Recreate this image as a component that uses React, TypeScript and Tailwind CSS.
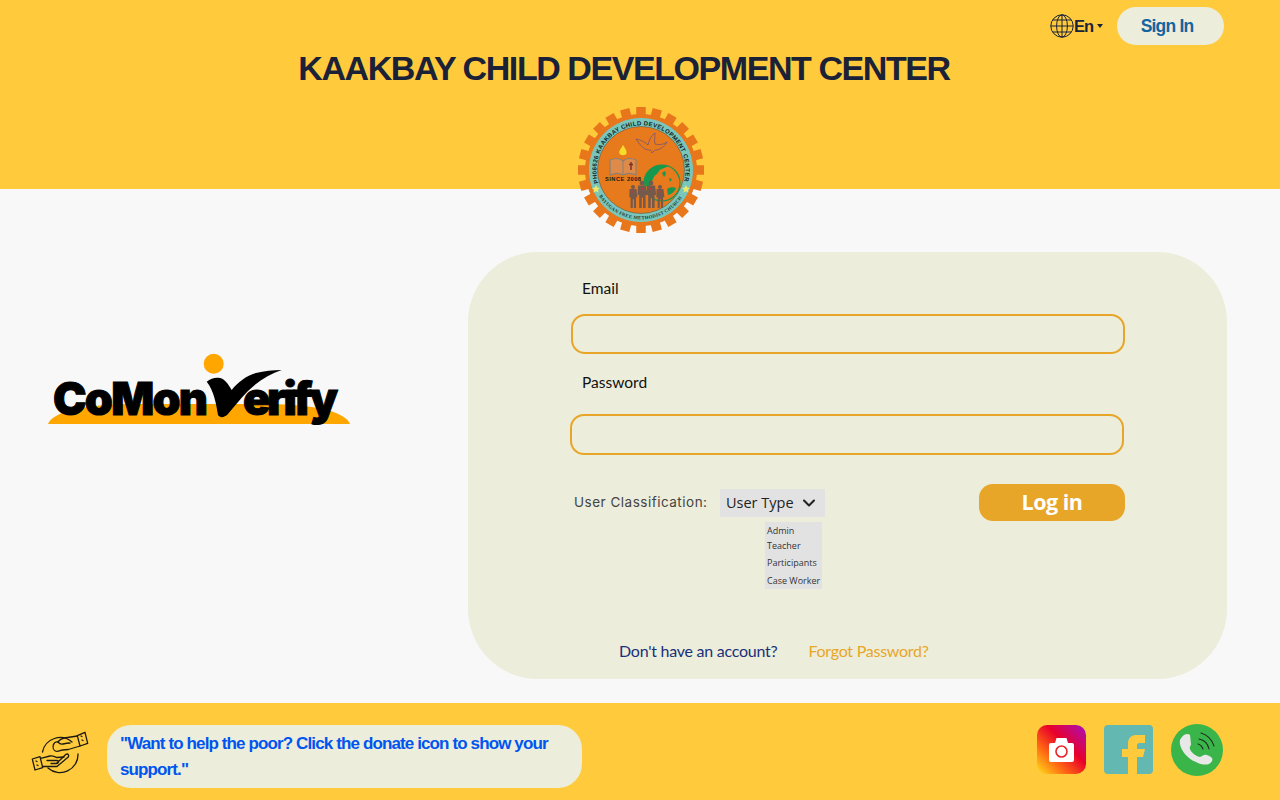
import { ChevronDown } from "lucide-react";

function GlobeIcon() {
  return (
    <svg viewBox="0 0 24 24" className="w-6 h-6" fill="none" stroke="#1b2238" strokeWidth="1">
      <circle cx="12" cy="12" r="11.2" />
      <ellipse cx="12" cy="12" rx="5.4" ry="11.2" />
      <path d="M12 .8v22.4M.8 12h22.4M2.6 6h18.8M2.6 18h18.8" />
    </svg>
  );
}

function Person({ x, y, s }: { x: number; y: number; s: number }) {
  return (
    <g transform={`translate(${x} ${y}) scale(${s})`}>
      <circle cx="0" cy="-3" r="3" fill="#75594d" />
      <path d="M-5 0h10l1.500 12h-2v16h-3.200v-13h-1.600v13h-3.200v-16h-2z" fill="#75594d" />
      <circle cx="0" cy="4" r="1.300" fill="#d4303a" />
    </g>
  );
}

function Seal() {
  const teeth = Array.from({ length: 24 }, (_, i) => (i * 360) / 24);
  return (
    <svg viewBox="0 0 128 128" className="w-32 h-32 overflow-visible">
      <defs>
        <path id="sealTop" d="M 21.500 77 A 44.500 44.500 0 1 1 106.500 77" />
        <path id="sealBottom" d="M 22 90 A 49.500 49.500 0 0 0 106 90" />
      </defs>
      {teeth.map((a) => (
        <rect key={a} x="59.250" y="1" width="9.500" height="12" fill="#e8761b" transform={`rotate(${a} 64 64)`} />
      ))}
      <circle cx="64" cy="64" r="56" fill="#e8761b" />
      <circle cx="64" cy="64" r="52" fill="#79c6bd" />
      <circle cx="64" cy="64" r="43.500" fill="#e67a1c" stroke="#2c3a3a" strokeWidth="0.4" />
      <text fontFamily="Liberation Sans" fontWeight="700" fontSize="6.100" fill="#10241f">
        <textPath href="#sealTop" textLength="164">PH06626 KAAKBAY CHILD DEVELOPMENT CENTER</textPath>
      </text>
      <text fontFamily="Liberation Serif" fontWeight="700" fontSize="4.800" fill="#1f3a30">
        <textPath href="#sealBottom" textLength="98">BAYUGAN FREE METHODIST CHURCH</textPath>
      </text>
      <path d="M19 79l1.200 2.600 2.800.3-2.100 1.900.6 2.800-2.500-1.400-2.500 1.400.6-2.800-2.100-1.900 2.800-.3z" fill="#efe96a" />
      <path d="M109 79l1.200 2.600 2.800.3-2.100 1.900.6 2.800-2.500-1.400-2.500 1.400.6-2.800-2.100-1.900 2.800-.3z" fill="#efe96a" />
      <path d="M46 39c3 4.500 4 6.500 3.500 8.500s-6 2.500-7 0 1-4 3.500-8.500z" fill="#f7dc2a" />
      <path d="M33 54c5-2 10-2 13 1 3-3 8-3 13-1v15c-5-2-10-2-13 0-3-2-8-2-13 0z" fill="#dd8a4a" stroke="#8a8078" strokeWidth="1.200" />
      <path d="M46 55v14" stroke="#8a8078" strokeWidth="1" />
      <path d="M54 56v8M52 58.500h4" stroke="#7a2f25" strokeWidth="1.400" />
      <text x="28" y="75" fontFamily="Liberation Sans" fontWeight="700" fontSize="5.700" fill="#1a1a1a" textLength="36">SINCE 2008</text>
      <path d="M59 33c5 1 9 3 12 6 1-5 3-9 7-12 0 5-1 8 0 11 3 1 8 1 12-2-3 5-7 8-12 8l-3 3c0-2-1-3-3-3-5 0-9-5-13-11z" fill="none" stroke="#57488f" strokeWidth="0.6" />
      <path d="M67 77a18 18 0 0 1 18-18l6 1c-2 2-7 2-9 5-2 4-5 4-6 8-2 3-2 6-4 9-2-1-4-3-5-5z" fill="#16994e" />
      <path d="M85 67l3-2 1 3-2 3zM92 72l3 1-2 3zM90 83c3-2 6-2 9-1-1 3-4 6-8 7z" fill="#16994e" />
      <circle cx="85" cy="77" r="18" fill="none" stroke="#16994e" strokeWidth="1.200" />
      <Person x={56} y={83} s={0.68} />
      <Person x={65} y={79.500} s={0.8} />
      <Person x={74} y={79.500} s={0.8} />
      <Person x={83} y={83} s={0.68} />
    </svg>
  );
}

function CoMonLogo() {
  return (
    <svg viewBox="0 0 302 72" className="w-[302px] h-[72px] overflow-visible">
      <path d="M0 71c4-11 30-19 80-20h142c50 1 76 9 80 20z" fill="#ffa600" />
      <circle cx="165.700" cy="10.700" r="10" fill="#ffa600" />
      <text x="5" y="62" fontFamily="Inter" fontWeight="900" fontSize="45" textLength="155" lengthAdjust="spacing" fill="#000" stroke="#000" strokeWidth="1">CoMon</text>
      <text x="195" y="62" fontFamily="Inter" fontWeight="900" fontSize="45" textLength="95" lengthAdjust="spacing" fill="#000" stroke="#000" strokeWidth="1">erify</text>
      <path d="M158.700 28.700C163 25 168 24 172 25 177 26 180 31 183.700 37 190 29 198 23 208 20 216 18 225 17 233.700 17 222 21 210 28 200 38 192 46 186 54 180 61 176 65 172 65 170 62 168 50 166 38 158.700 28.700z" fill="#000" />
    </svg>
  );
}

function DonateIcon() {
  return (
    <svg viewBox="0 0 56 42" className="w-14 h-[42px] overflow-visible" fill="none" stroke="#1c1a12" strokeWidth="1.300" strokeLinejoin="round" strokeLinecap="round">
      <path d="M10.500 21A18 18 0 0 1 40 11" />
      <path d="M46 23A18 18 0 0 1 16 37" />
      <path d="M45.300 5l-13 2c-3 .5-5 2-6.500 4-2-.5-4 1-4.500 3s0 5 2 6c3 1.500 5-1 7-1l6-.5L48 15" />
      <path d="M26 11c1.500 2 3 2.500 5 2 2-.5 4-1 7-1" />
      <path d="M45.300 4.700L53 1.300l2.700 11L48 15zM49 5l1 .5M50 9l1 .5" />
      <path d="M0.300 28L8 25.700l2.700 11L3 39zM4 30l1 .5M5 34l1 .5" />
      <path d="M8.700 27.300L18 25c3-.5 5 1 7 1.500l7-.5" />
      <path d="M15 29.500h10c2 0 2 2.500 0 3h-6" />
      <path d="M25 32l9-8.700c2-1 3.500 1 2 3L25 35.500H10.700" />
    </svg>
  );
}

function InstagramIcon() {
  return (
    <svg viewBox="0 0 49 49" className="w-[49px] h-[49px]">
      <defs>
        <linearGradient id="igGrad" x1="0" y1="1" x2="1" y2="0">
          <stop offset="0" stopColor="#ffe01a" />
          <stop offset="0.3" stopColor="#ff6a12" />
          <stop offset="0.6" stopColor="#e8002a" />
          <stop offset="1" stopColor="#a80fc0" />
        </linearGradient>
      </defs>
      <rect width="49" height="49" rx="10" fill="url(#igGrad)" />
      <path d="M14 18h4l1.500-5h10l1.500 5h4a2 2 0 0 1 2 2v15a2 2 0 0 1-2 2H14a2 2 0 0 1-2-2V20a2 2 0 0 1 2-2z" fill="#fff" />
      <circle cx="24.500" cy="26.500" r="5.500" fill="none" stroke="#e8262c" strokeWidth="1.600" />
    </svg>
  );
}

function FacebookIcon() {
  return (
    <svg viewBox="0 0 49 49" className="w-[49px] h-[49px]">
      <rect width="49" height="49" rx="4" fill="#64b8b2" />
      <path d="M24 49V32h-6v-8h6v-5c0-7 4-9 9-9h8v8h-5c-2.500 0-3 1-3 3v3h8l-2 8h-6v17z" fill="#ffcb3c" />
    </svg>
  );
}

function PhoneIcon() {
  return (
    <svg viewBox="0 0 52 52" className="w-[52px] h-[52px]">
      <circle cx="26" cy="26" r="26" fill="#3ab54a" />
      <path d="M11 13c2-3 6-4 8-2l1 9c0 2-2 3-1 5 1 3 5 7 10 8l4-2c2-1 6 1 8 3 1 2 0 4-3 6-3 1-8 1-13-2C17 35 10 27 9 20c-.5-3 0-5 2-7z" fill="#e8e8e8" />
      <path d="M27 20c2 .5 4 2.500 5 5M28 15c5 1 9 5 10 10M30 9c7 2 11 7 13 13" fill="none" stroke="#1f2a1f" strokeWidth="1.100" strokeLinecap="round" />
    </svg>
  );
}

function App() {
  return (
    <div className="w-[1280px] h-[800px] flex flex-col overflow-hidden font-['Liberation_Sans',sans-serif]">
      <header className="relative h-[189px] bg-[#ffcb3c] shrink-0">
        <div className="flex items-center justify-end h-[38px] pt-[7px] box-content pr-[56px]">
          <GlobeIcon />
          <span className="font-bold text-[16.500px] tracking-[-1px] text-[#1b2238] w-[23px]">En</span>
          <svg viewBox="0 0 6 4" className="w-[6px] h-[4px] mr-[14px]"><path d="M0 0h6L3 4z" fill="#1b2238" /></svg>
          <button className="w-[107px] h-[38px] pr-[7px] rounded-[19px] bg-[#ecedDB] text-[#14659f] font-bold text-[17.500px] tracking-[-0.8px]">
            Sign In
          </button>
        </div>
        <h1 className="absolute top-[46px] left-0 w-[1248px] text-center text-[34px] leading-[44px] font-bold tracking-[-1.43px] text-[#1b2238]">
          KAAKBAY CHILD DEVELOPMENT CENTER
        </h1>
        <div className="absolute left-[577px] top-[106px] z-10">
          <Seal />
        </div>
      </header>

      <main className="flex-1 flex bg-[#f8f8f8]">
        <div className="w-[468px] shrink-0 pl-[48px] pt-[164px]">
          <CoMonLogo />
        </div>
        <section className="w-[759px] h-[427px] mt-[63px] rounded-[70px] bg-[#ecedDB] pl-[103px] pr-[102px] pt-[24px] font-['Lato',sans-serif]">
          <label className="block h-6 pl-[11px] text-[15.500px] leading-6 text-[#111]">Email</label>
          <input className="block mt-[14px] w-[554px] h-[40px] rounded-[14px] border-2 border-[#e8a628] bg-transparent" />
          <label className="block mt-[16px] h-6 pl-[11px] text-[15.500px] leading-6 text-[#111]">Password</label>
          <input className="block mt-[20px] -ml-px w-[554px] h-[41px] rounded-[14px] border-2 border-[#e8a628] bg-transparent" />
          <div className="relative flex items-center mt-[29px] h-[37px] w-[554px]">
            <span className="ml-[3px] text-[13.500px] tracking-[0.5px] text-[#444] font-['Inter',sans-serif]">User Classification:</span>
            <div className="absolute left-[149px] top-[5px] w-[105px] h-[28px] flex items-center pl-[6px] bg-[#e2e2e2] text-[14.500px] text-[#222] font-['Open_Sans',sans-serif]">
              User Type
              <ChevronDown className="ml-[5px] w-[20px] h-[20px]" strokeWidth={2.5} />
            </div>
            <div className="absolute left-[194px] top-[38px] w-[57px] h-[67px] flex flex-col pl-[2px] pt-px bg-[#e2e2e2] text-[9px] text-[#333] font-['Open_Sans',sans-serif]">
              <span className="leading-[15px]">Admin</span>
              <span className="leading-[15px]">Teacher</span>
              <span className="leading-[18px] mt-px">Participants</span>
              <span className="leading-[17px]">Case Worker</span>
            </div>
            <button className="ml-auto w-[146px] h-[37px] rounded-[14px] bg-[#e8a628] text-white text-[21.500px] font-bold tracking-[-0.5px] font-['Open_Sans',sans-serif]">
              Log in
            </button>
          </div>
          <div className="flex mt-[118px] pl-[48px] text-[16px] leading-6 tracking-[-0.25px]">
            <a className="text-[#1b2f7a]">Don't have an account?</a>
            <a className="ml-[31px] text-[#e8a628]">Forgot Password?</a>
          </div>
        </section>
      </main>

      <footer className="h-[97px] shrink-0 flex items-start bg-[#ffcb3c]">
        <div className="ml-[32px] mt-[28px]">
          <DonateIcon />
        </div>
        <div className="ml-[19px] mt-[22px] w-[475px] h-[63px] rounded-[24px] bg-[#ecedDB] pl-[13px] pr-[20px] pt-[6px] text-[17px] leading-[26px] font-bold tracking-[-0.88px] text-[#0055f0]">
          "Want to help the poor? Click the donate icon to show your support."
        </div>
        <div className="ml-auto mr-[57px] mt-[21px] flex items-start gap-[18px]">
          <div className="mt-px"><InstagramIcon /></div>
          <div className="mt-px"><FacebookIcon /></div>
          <PhoneIcon />
        </div>
      </footer>
    </div>
  );
}

export default App;
